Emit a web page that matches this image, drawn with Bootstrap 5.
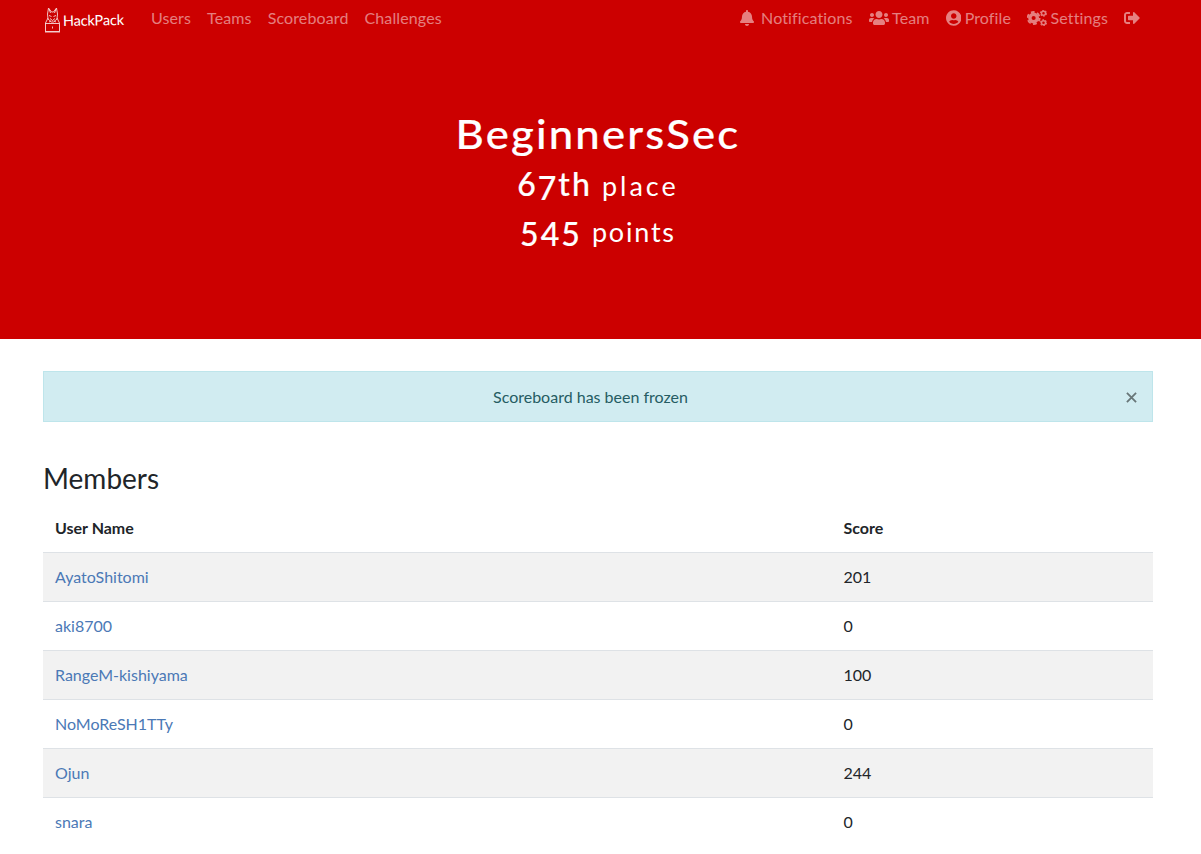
<!DOCTYPE html>
<html lang="en">
<head>
<meta charset="utf-8">
<title>HackPack</title>
<link href="https://cdn.jsdelivr.net/npm/bootstrap@5.3.0/dist/css/bootstrap.min.css" rel="stylesheet">
<style>
body{font-family:Lato,"Liberation Sans",sans-serif;color:#212529;overflow:hidden}
.page-gutter{padding-right:5px}
.container{max-width:1140px;padding-left:15px;padding-right:15px}
.brand-red{background:#c00}
.site-nav{height:38px;padding:0}
.site-nav .nav-link{color:rgba(255,255,255,.5);padding:6px 8px 8px;white-space:nowrap;display:flex;align-items:center;line-height:24px;height:38px;letter-spacing:.12px}
.site-nav .nav-link svg{height:16px;fill:currentColor;flex:none;margin-right:3.5px}
.site-nav .nav-link .bell{margin-right:7px}
.site-nav .nav-link .exit{margin-right:0}
.logo{width:84px;height:30px;margin:1px 16px 0 0;padding:0;display:block}
.account{margin-right:5px}
.hero{height:301px;padding-top:66px;color:#fff;text-align:center}
.hero h1,.hero h2{font-weight:500;margin:0;white-space:nowrap;-webkit-text-stroke:.2px #fff}
.hero h1{font-size:40px;line-height:60px;letter-spacing:2px;transform:scaleX(1.09)}
.hero h2{font-size:32px;line-height:48px;letter-spacing:2px}
.hero .place{height:46px;margin-top:-4px}
.hero h2 small{font-size:27px;font-weight:400;letter-spacing:1.8px;-webkit-text-stroke:0}
.hero .place small{letter-spacing:3px}
.low{vertical-align:-4px;line-height:1}
.frozen{margin-top:32px;height:51px;background:#d1ecf1;border:1px solid #bee5eb;border-radius:0;color:#255c63;padding:13px 38px 12px 23px;margin-bottom:36px}
.frozen button{position:absolute;right:15px;top:20px;border:0;background:none;padding:0;line-height:0}
.frozen,.frozen span{line-height:24px}
.members-title{font-size:28px;line-height:40px;font-weight:400;margin:0 0 6px}
.score-table{--bs-table-striped-bg:#f2f2f2;margin:0;table-layout:fixed}
.score-table th,.score-table td{padding:12px;line-height:24px;border-bottom:1px solid #dee2e6}
.score-table tr:last-child td{border-bottom:0}
.score-table th:first-child{width:788.5px}
.score-table a{color:#4b79b6;text-decoration:none}
</style>
</head>
<body>
<header class="brand-red">
<div class="page-gutter">
<nav class="navbar navbar-expand site-nav">
<div class="container">
<a class="logo" href="#"><svg width="84" height="30" viewBox="0 0 84 30" fill="none" stroke="#fff">
<g stroke-width=".9" opacity=".85"><path d="M4.500 9L5.500 3l3 4h2l3-4 1 6-.5 5-3.500 3h-2L5 14zM6 10.500l2.500 1m4.500-1l-2.500 1M7 13.500l2.500 2 2.500-2M6 4l1.500 4M13 4l-1.500 4M5 13l-2.500 5M14 13l2.500 5M6 17l2-1m3 0l2 1"/><rect x="2.500" y="18.500" width="14" height="8"/><path d="M9.500 21.500v2M2 27h15"/></g>
<text x="20" y="20.500" fill="#fff" stroke="none" font-family="Lato,sans-serif" font-size="14.500" textLength="61" transform="rotate(-1 50 18)">HackPack</text></svg></a>
<ul class="navbar-nav me-auto">
<li class="nav-item"><a class="nav-link" href="#">Users</a></li>
<li class="nav-item"><a class="nav-link" href="#">Teams</a></li>
<li class="nav-item"><a class="nav-link" href="#">Scoreboard</a></li>
<li class="nav-item"><a class="nav-link" href="#">Challenges</a></li>
</ul>
<ul class="navbar-nav account">
<li class="nav-item"><a class="nav-link" href="#"><svg class="bell" viewBox="0 0 448 512"><path d="M224 512c35.320 0 63.970-28.650 63.970-64H160.030c0 35.350 28.650 64 63.970 64zm215.390-149.710c-19.320-20.760-55.470-51.990-55.470-154.290 0-77.700-54.480-139.900-127.940-155.160V32c0-17.670-14.320-32-31.980-32s-31.980 14.330-31.980 32v20.840C118.560 68.100 64.080 130.300 64.080 208c0 102.300-36.150 133.530-55.470 154.290-6 6.450-8.660 14.160-8.610 21.710.11 16.400 12.980 32 32.100 32h383.800c19.120 0 32-15.600 32.100-32 .05-7.550-2.610-15.270-8.610-21.710z"/></svg>Notifications</a></li>
<li class="nav-item"><a class="nav-link" href="#"><svg viewBox="0 0 640 512"><path d="M96 224c35.300 0 64-28.700 64-64s-28.700-64-64-64-64 28.700-64 64 28.700 64 64 64zm448 0c35.300 0 64-28.700 64-64s-28.700-64-64-64-64 28.700-64 64 28.700 64 64 64zm32 32h-64c-17.600 0-33.500 7.100-45.100 18.600 40.300 22.100 68.900 62 75.100 109.400h66c17.700 0 32-14.300 32-32v-32c0-35.300-28.700-64-64-64zm-256 0c61.900 0 112-50.100 112-112S381.900 32 320 32 208 82.100 208 144s50.100 112 112 112zm76.800 32h-8.300c-20.800 10-43.900 16-68.500 16s-47.600-6-68.500-16h-8.300C179.600 288 128 339.600 128 403.200V432c0 26.500 21.500 48 48 48h288c26.500 0 48-21.500 48-48v-28.800c0-63.600-51.600-115.200-115.200-115.200zm-223.700-13.400C161.500 263.100 145.600 256 128 256H64c-35.300 0-64 28.700-64 64v32c0 17.700 14.300 32 32 32h65.900c6.300-47.400 34.900-87.300 75.200-109.400z"/></svg>Team</a></li>
<li class="nav-item"><a class="nav-link" href="#"><svg viewBox="0 0 496 512"><path d="M248 8C111 8 0 119 0 256s111 248 248 248 248-111 248-248S385 8 248 8zm0 96c48.600 0 88 39.400 88 88s-39.400 88-88 88-88-39.400-88-88 39.400-88 88-88zm0 344c-58.700 0-111.300-26.600-146.500-68.200 18.800-35.400 55.600-59.800 98.500-59.800 2.400 0 4.800.4 7.100 1.100 13 4.200 26.600 6.900 40.900 6.900 14.300 0 28-2.700 40.900-6.900 2.300-.7 4.700-1.100 7.100-1.100 42.900 0 79.700 24.400 98.500 59.800C359.300 421.400 306.700 448 248 448z"/></svg>Profile</a></li>
<li class="nav-item"><a class="nav-link" href="#"><svg viewBox="0 0 640 512" style="fill:none" stroke="#e57f7f"><circle cx="212" cy="256" r="120" stroke-width="108"/><circle cx="212" cy="256" r="192" stroke-width="60" pathLength="12" stroke-dasharray="1.200 .8" stroke-dashoffset=".1"/><circle cx="528" cy="104" r="65" stroke-width="48"/><circle cx="528" cy="104" r="94" stroke-width="34" pathLength="12" stroke-dasharray="1.100 .9"/><circle cx="528" cy="408" r="65" stroke-width="48"/><circle cx="528" cy="408" r="94" stroke-width="34" pathLength="12" stroke-dasharray="1.100 .9"/></svg>Settings</a></li>
<li class="nav-item"><a class="nav-link" href="#" aria-label="Logout"><svg class="exit" viewBox="0 0 512 512"><path d="M497 273L329 441c-15 15-41 4.500-41-17v-96H152c-13.300 0-24-10.700-24-24v-96c0-13.300 10.700-24 24-24h136V88c0-21.400 25.900-32 41-17l168 168c9.300 9.400 9.300 24.600 0 34zM192 436v-40c0-6.600-5.400-12-12-12H96c-17.700 0-32-14.300-32-32V160c0-17.700 14.300-32 32-32h84c6.600 0 12-5.400 12-12V76c0-6.600-5.400-12-12-12H96c-53 0-96 43-96 96v192c0 53 43 96 96 96h84c6.600 0 12-5.400 12-12z"/></svg></a></li>
</ul>
</div>
</nav>
<div class="hero">
<h1>BeginnersSec</h1>
<h2 class="place">6<span class="low">7</span>th <small>place</small></h2>
<h2 class="points"><span class="low">545</span> <small>points</small></h2>
</div>
</div>
</header>
<main class="page-gutter">
<div class="container">
<div class="alert frozen text-center" role="alert"><span>Scoreboard has been frozen</span>
<button type="button" aria-label="Close"><svg width="11" height="11" viewBox="0 0 12 12" stroke="#687678" stroke-width="2" fill="none"><path d="M1 1l10 10M11 1L1 11"/></svg></button></div>
<h3 class="members-title">Members</h3>
<table class="table table-striped score-table">
<thead><tr><th>User Name</th><th>Score</th></tr></thead>
<tbody>
<tr><td><a href="#">AyatoShitomi</a></td><td>201</td></tr>
<tr><td><a href="#">aki8700</a></td><td>0</td></tr>
<tr><td><a href="#">RangeM-kishiyama</a></td><td>100</td></tr>
<tr><td><a href="#">NoMoReSH1TTy</a></td><td>0</td></tr>
<tr><td><a href="#">Ojun</a></td><td>244</td></tr>
<tr><td><a href="#">snara</a></td><td>0</td></tr>
</tbody>
</table>
</div>
</main>
<script src="https://cdn.jsdelivr.net/npm/bootstrap@5.3.0/dist/js/bootstrap.bundle.min.js"></script>
</body>
</html>
